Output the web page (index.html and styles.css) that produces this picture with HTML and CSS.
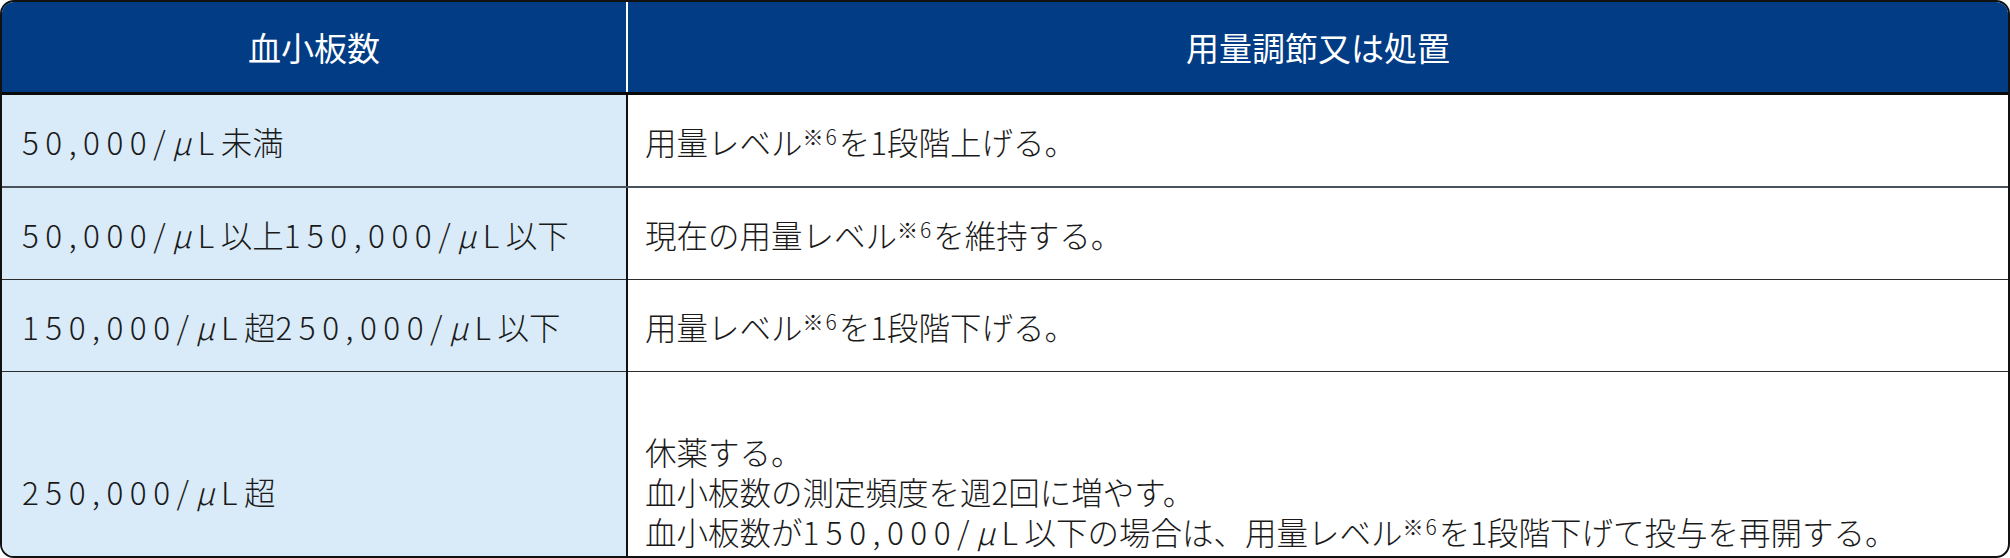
FILE: index.html
```html
<!DOCTYPE html>
<html lang="ja">
<head>
<meta charset="utf-8">
<title>血小板数と用量調節</title>
<link rel="stylesheet" href="styles.css">
</head>
<body>
<div class="frame">
  <table class="dose">
    <thead>
      <tr>
        <th class="col-a">血小板数</th>
        <th class="col-b">用量調節又は処置</th>
      </tr>
    </thead>
    <tbody>
      <tr class="r1">
        <td class="col-a"><span class="num">50,000/<i>μ</i>L</span>未満</td>
        <td class="col-b">用量レベル<sup>※6</sup>を1段階上げる。</td>
      </tr>
      <tr class="r2">
        <td class="col-a"><span class="num">50,000/<i>μ</i>L</span>以上<span class="num">150,000/<i>μ</i>L</span>以下</td>
        <td class="col-b">現在の用量レベル<sup>※6</sup>を維持する。</td>
      </tr>
      <tr class="r3">
        <td class="col-a"><span class="num">150,000/<i>μ</i>L</span>超<span class="num">250,000/<i>μ</i>L</span>以下</td>
        <td class="col-b">用量レベル<sup>※6</sup>を1段階下げる。</td>
      </tr>
      <tr class="r4">
        <td class="col-a"><span class="num">250,000/<i>μ</i>L</span>超</td>
        <td class="col-b"><div class="line">休薬する。</div><div class="line">血小板数の測定頻度を週2回に増やす。</div><div class="line">血小板数が<span class="num">150,000/<i>μ</i>L</span>以下の場合は、用量レベル<sup>※6</sup>を1段階下げて投与を再開する。</div></td>
      </tr>
    </tbody>
  </table>
</div>
</body>
</html>
```

FILE: styles.css
```css
html, body {
  margin: 0;
  padding: 0;
  background: #ffffff;
}

body {
  font-family: "Noto Sans CJK JP", "Noto Sans", sans-serif;
  color: #1a1a1a;
}

.frame {
  width: 2010px;
  height: 558px;
  box-sizing: border-box;
  border: 2px solid #111111;
  border-radius: 14px;
  overflow: hidden;
  background: #ffffff;
}

.dose {
  width: 100%;
  border-collapse: collapse;
  table-layout: fixed;
}

.dose th,
.dose td {
  padding: 0;
  vertical-align: middle;
}

.dose th {
  height: 90px;
  background: #013c85;
  color: #ffffff;
  font-size: 33px;
  font-weight: 400;
  text-align: center;
  border-bottom: 3px solid #0a0a0a;
}

.dose th.col-a {
  border-right: 2px solid #ffffff;
}

.dose .col-a {
  width: 624px;
}

.dose td {
  font-size: 31.5px;
  font-weight: 300;
  line-height: 40px;
  text-align: left;
  white-space: nowrap;
}

.dose td.col-a {
  background: #d9eaf8;
  padding-left: 20px;
  border-right: 2px solid #111111;
}

.dose td.col-b {
  padding-left: 17px;
}

.r1 td {
  height: 91px;
  border-bottom: 2px solid #4a535c;
}

.r2 td,
.r3 td {
  height: 91px;
  border-bottom: 1px solid #2c2c2c;
}

.r4 td {
  height: 130px;
  padding-top: 54px;
}

.line {
  height: 40px;
}

.num {
  letter-spacing: 6.5px;
}

.dose i {
  font-style: italic;
}

.dose sup {
  font-size: 21px;
  letter-spacing: 2px;
  line-height: 0;
  vertical-align: 10px;
}
```
